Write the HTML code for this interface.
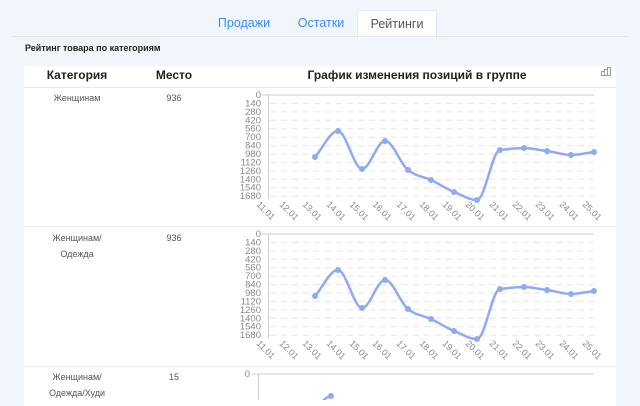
<!DOCTYPE html>
<html><head><meta charset="utf-8"><style>
body{margin:0;width:640px;height:400px;overflow:hidden;background:#f1f6fd;font-family:"Liberation Sans",Arial,sans-serif;position:relative}
.tab{position:absolute;top:10px;height:27px;line-height:26px;font-size:12.5px;color:#3d8af7;text-align:center}
.act{background:#fff;border:1px solid #e3e8ef;border-bottom:none;border-radius:3px 3px 0 0;color:#555}
.line{position:absolute;left:12px;top:36px;width:617px;height:1px;background:#e3e8ef}
.title{position:absolute;left:25px;top:43px;font-size:9px;font-weight:bold;color:#222}
.panel{position:absolute;left:24px;top:66px;width:592px;height:340px;background:#fff}
.h{position:absolute;top:2px;font-size:12px;font-weight:bold;color:#222;text-align:center}
.sep{position:absolute;left:0;width:592px;height:1px;background:#e8eaee}
.c{position:absolute;font-size:9px;color:#555;text-align:center;line-height:16px}
svg{position:absolute;left:0;top:0}
</style></head><body>
<div class="tab" style="left:214px;width:60px">Продажи</div>
<div class="tab" style="left:291px;width:60px">Остатки</div>
<div class="tab act" style="left:357px;width:78px">Рейтинги</div>
<div class="line"></div>
<div class="title">Рейтинг товара по категориям</div>
<div class="panel">
<div class="h" style="left:13px;width:80px">Категория</div>
<div class="h" style="left:120px;width:60px">Место</div>
<div class="h" style="left:250px;width:286px">График изменения позиций в группе</div>
<div class="sep" style="top:21px"></div>
<div class="sep" style="top:160px"></div>
<div class="sep" style="top:300px"></div>
<div class="c" style="left:13px;width:80px;top:24px">Женщинам</div>
<div class="c" style="left:120px;width:60px;top:24px">936</div>
<div class="c" style="left:13px;width:80px;top:164px">Женщинам/<br>Одежда</div>
<div class="c" style="left:120px;width:60px;top:164px">936</div>
<div class="c" style="left:3px;width:100px;top:303px">Женщинам/<br>Одежда/Худи</div>
<div class="c" style="left:120px;width:60px;top:303px">15</div>
</div>
<svg width="640" height="400" viewBox="0 0 640 400">
<defs>
<g id="ch" font-family="Liberation Sans, sans-serif" font-size="9.5" fill="#888">
<g stroke="#e6e6e6" stroke-dasharray="6,5">
<line x1="270" x2="594" y1="8.4" y2="8.4"/><line x1="270" x2="594" y1="16.9" y2="16.9"/><line x1="270" x2="594" y1="25.3" y2="25.3"/><line x1="270" x2="594" y1="33.7" y2="33.7"/><line x1="270" x2="594" y1="42.2" y2="42.2"/><line x1="270" x2="594" y1="50.6" y2="50.6"/><line x1="270" x2="594" y1="59" y2="59"/><line x1="270" x2="594" y1="67.4" y2="67.4"/><line x1="270" x2="594" y1="75.9" y2="75.9"/><line x1="270" x2="594" y1="84.3" y2="84.3"/><line x1="270" x2="594" y1="92.7" y2="92.7"/><line x1="270" x2="594" y1="101.2" y2="101.2"/>
</g>
<line x1="262" y1="0" x2="594" y2="0" stroke="#ccc"/>
<line x1="268.5" y1="0" x2="268.5" y2="104" stroke="#ccc"/>
<g text-anchor="end">
<text x="261" y="3">0</text><text x="261" y="11.4">140</text><text x="261" y="19.9">280</text><text x="261" y="28.3">420</text><text x="261" y="36.7">560</text><text x="261" y="45.2">700</text><text x="261" y="53.6">840</text><text x="261" y="62">980</text><text x="261" y="70.4">1120</text><text x="261" y="78.9">1260</text><text x="261" y="87.3">1400</text><text x="261" y="95.7">1540</text><text x="261" y="104.2">1680</text>
</g>
<g font-size="9">
<text transform="translate(256,110) rotate(45)">11.01</text>
<text transform="translate(279,110) rotate(45)">12.01</text>
<text transform="translate(302,110) rotate(45)">13.01</text>
<text transform="translate(326,110) rotate(45)">14.01</text>
<text transform="translate(349,110) rotate(45)">15.01</text>
<text transform="translate(372,110) rotate(45)">16.01</text>
<text transform="translate(396,110) rotate(45)">17.01</text>
<text transform="translate(419,110) rotate(45)">18.01</text>
<text transform="translate(442,110) rotate(45)">19.01</text>
<text transform="translate(465,110) rotate(45)">20.01</text>
<text transform="translate(489,110) rotate(45)">21.01</text>
<text transform="translate(512,110) rotate(45)">22.01</text>
<text transform="translate(535,110) rotate(45)">23.01</text>
<text transform="translate(559,110) rotate(45)">24.01</text>
<text transform="translate(582,110) rotate(45)">25.01</text>
</g>
<path d="M315,62 C323,53 330,36 338,36 C346,36 354,74 362,74 C370,74 377,46 385,46 C393,46 400,68.5 408,75 C416,81.5 423,81.3 431,85 C439,88.7 446,93.7 454,97 C462,100 469,105 477,105 C485,105 492,56 500,55 C508,54 516,53 524,53 C532,53 539,55 547,56 C555,57 563,60 571,60 C579,60 586,58 594,57" fill="none" stroke="#8fa9f5" stroke-width="2.5"/>
<g fill="#8fa9f5">
<circle cx="315" cy="62" r="3"/><circle cx="338" cy="36" r="3"/><circle cx="362" cy="74" r="3"/><circle cx="385" cy="46" r="3"/><circle cx="408" cy="75" r="3"/><circle cx="431" cy="85" r="3"/><circle cx="454" cy="97" r="3"/><circle cx="477" cy="105" r="3"/><circle cx="500" cy="55" r="3"/><circle cx="524" cy="53" r="3"/><circle cx="547" cy="56" r="3"/><circle cx="571" cy="60" r="3"/><circle cx="594" cy="57" r="3"/>
</g>
</g>
</defs>
<use href="#ch" transform="translate(0,95)"/>
<use href="#ch" transform="translate(0,234)"/>
<g transform="translate(0,374)">
<line x1="252" y1="0" x2="594" y2="0" stroke="#ccc"/>
<line x1="258.5" y1="0" x2="258.5" y2="30" stroke="#ccc"/>
<text x="250" y="3" font-size="9.5" fill="#888" text-anchor="end" font-family="Liberation Sans, sans-serif">0</text>
<path d="M322,28 C326,24 328,22 331,22" fill="none" stroke="#8fa9f5" stroke-width="2.5"/>
<circle cx="331" cy="22" r="3" fill="#8fa9f5"/>
</g>
<g fill="none" stroke="#999" stroke-width="1">
<rect x="601.5" y="71.5" width="3" height="4"/><rect x="604.5" y="69.5" width="3" height="6"/><rect x="607.5" y="67.5" width="3" height="8"/>
</g>
</svg>
</body></html>
